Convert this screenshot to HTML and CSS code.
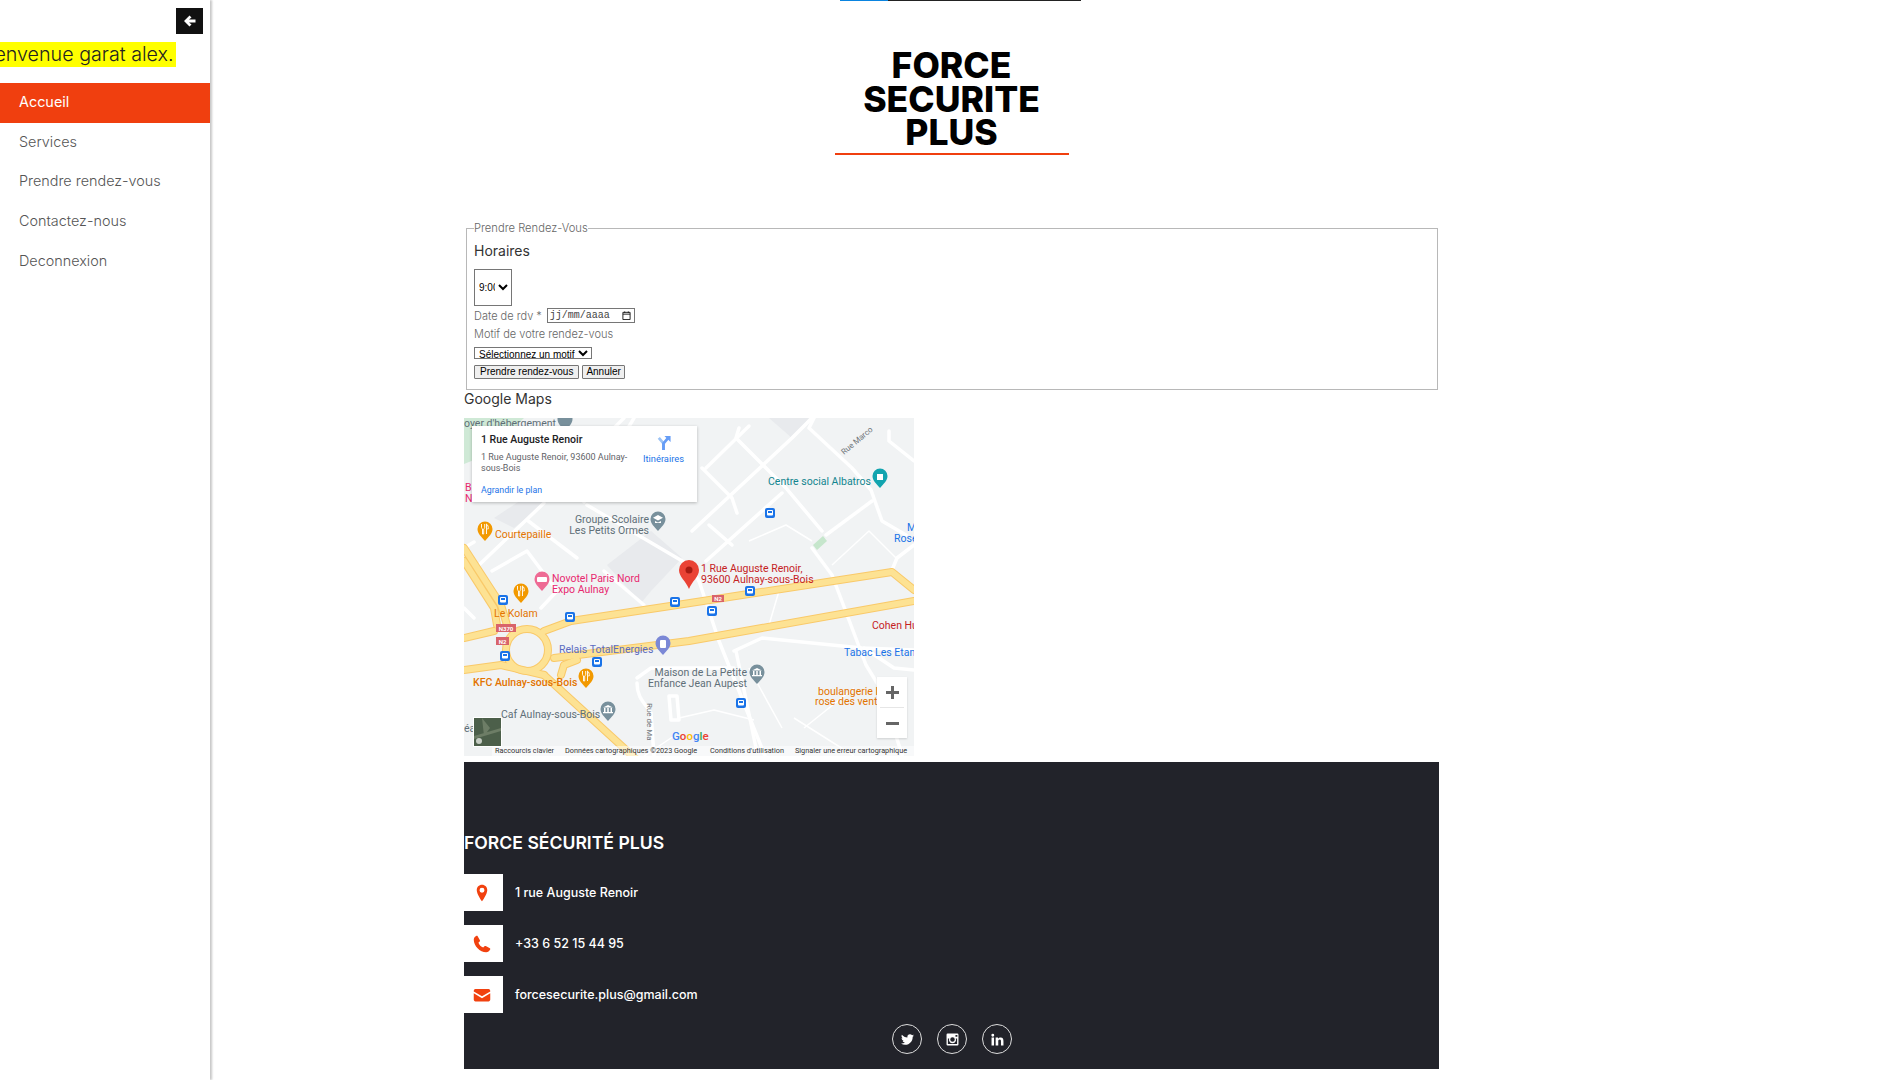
FILE: index.html
```html
<!DOCTYPE html>
<html lang="fr">
	<head>
		<meta charset="UTF-8">
		<meta name="viewport" content="width=device-width, initial-scale=1.0">
		<title>Force Securite Plus</title>
		<link rel="stylesheet" href="styles.css">
	</head>
	<body>
		<!-- Sidebar -->
		<aside class="sidebar">
			<div class="toggle-row">
				<button class="toggle-btn" type="button" aria-label="Fermer">
					<svg viewBox="0 0 24 24" width="12" height="12"><path d="M11 1l4 4-5 4h13v6H10l5 4-4 4L0 12z" fill="#fff"/></svg>
				</button>
			</div>
			<div class="welcome"><span>Bienvenue garat alex.</span></div>
			<nav class="nav">
				<a href="#" class="nav-item active">Accueil</a>
				<a href="#" class="nav-item">Services</a>
				<a href="#" class="nav-item">Prendre rendez-vous</a>
				<a href="#" class="nav-item">Contactez-nous</a>
				<a href="#" class="nav-item">Deconnexion</a>
			</nav>
		</aside>

		<main class="content">
			<div class="loader"><div class="loader-fill"></div></div>
			<h1 class="title">FORCE<br>SECURITE<br>PLUS</h1>

			<!-- Form -->
			<fieldset class="rdv">
				<legend>Prendre Rendez-Vous</legend>
				<h4 class="rdv-title">Horaires</h4>
				<select class="hour-select"><option>9:00</option></select>
				<div class="date-row">
					<label>Date de rdv *</label>
					<div class="date-input">
						<span>jj/mm/aaaa</span>
						<svg viewBox="0 0 10 10" width="9" height="9"><path d="M1 1.500h8v8H1zM1 3.500h8M3 .5v1.500M7 .5v1.500" fill="none" stroke="#111" stroke-width="1"/></svg>
					</div>
				</div>
				<label class="motif-label">Motif de votre rendez-vous</label>
				<select class="motif-select"><option>Sélectionnez un motif</option></select>
				<div class="btn-row">
					<button type="button" class="btn">Prendre rendez-vous</button>
					<button type="button" class="btn btn-cancel">Annuler</button>
				</div>
			</fieldset>

			<h4 class="maps-title">Google Maps</h4>

			<!-- Map -->
			<div class="map">
				<svg class="map-svg" viewBox="0 0 450 338" width="450" height="338">
					<defs>
						<path id="pin" d="M0 8C-3.600 3.600-7.500 1-7.500-4a7.500 7.500 0 0 1 15 0C7.500 1 3.600 3.600 0 8z"/>
						<g id="bus">
							<rect x="-5" y="-5" width="10" height="10" rx="2" fill="#1a73e8"/>
							<rect x="-3" y="-3" width="6" height="5.500" rx="1" fill="#fff"/>
							<rect x="-2" y="-2" width="4" height="2" fill="#1a73e8"/>
						</g>
						<g id="fork">
							<path d="M-3.500-9v3.500a1.500 1.500 0 0 0 1 1.400V1h1.200v-5.100a1.500 1.500 0 0 0 1-1.400V-9M1.500 1V-9c1.500 1 2 3 1.700 5H2.300" fill="none" stroke="#fff" stroke-width=".9"/>
						</g>
						<g id="school">
							<path d="M0-8l-5 2.800 5 2.700 5-2.700zM-3-2V0h6v-2L0-.5z" fill="#fff"/>
						</g>
						<g id="museum">
							<path d="M0-8l-5 2.500h10zM-4-5h1.500v4H-4zM-.75-5H.75v4H-.75zM2.500-5H4v4H2.500zM-5-1h10v1.200H-5z" fill="#fff"/>
						</g>
					</defs>

					<rect width="450" height="338" fill="#f1f3f4"/>
					<!-- green and blocks -->
					<path d="M0 0H60L20 38 0 46z" fill="#cfe9d6"/>
					<path d="M143 147l44-34 31 27-31 33-10 12z" fill="#e8eaed"/>
					<path d="M30 100l30-20 30-2-40 32z" fill="#e8eaed"/>
					<path d="M305 0h40l-17 20z" fill="#e8eaed"/>
					<path d="M349 127l10-9 4 5-10 9z" fill="#c6e6cc"/>

					<!-- small roads -->
					<g fill="none" stroke="#fff" stroke-width="3.500" stroke-linejoin="round" stroke-linecap="round">
						<path d="M275 10l-3 10 50 50 36 43"/>
						<path d="M350 0l-5 10 43 40 19 22 11 31 24 14"/>
						<path d="M228 113L328 20l20-20"/>
						<path d="M238 50l30 30 5 15"/>
						<path d="M245 107l23 20"/>
						<path d="M242 50l43-42"/>
						<path d="M318 75l-76 68"/>
						<path d="M348 130l20 27 34 90 16 26 20 64"/>
						<path d="M362 117l46-34"/>
						<path d="M428 152l5-12 17-13"/>
						<path d="M235 163l20 60 40 100 6 15"/>
						<path d="M272 233l20 97"/>
						<path d="M270 233l28-13 100 10 52 2"/>
						<path d="M425 13v10l25 20"/>
						<path d="M15 147l65-62"/>
						<path d="M28 153l35-20 30 40-16 17"/>
						<path d="M63 102l50 38"/>
						<path d="M123 87l102 60 10 16"/>
						<path d="M140 153l40 34"/>
						<path d="M173 260l14-10h38l45 0"/>
						<path d="M173 265c0 15 8 20 14 30l3 43"/>
						<path d="M205 278h8l2 24h-8zM0 130l10-6M0 190l10 10"/>
						<path d="M160 0l-14 14M120 84l50-84"/>
						<path d="M400 230l30 20 20 2"/>
					</g>
					<g fill="none" stroke="#fff" stroke-width="1.500" stroke-linejoin="round">
						<path d="M305 207l10-34"/>
						<path d="M285 123l37-16 26 16"/>
						<path d="M368 147l37-34 27 27"/>
						<path d="M285 250l33 60"/>
						<path d="M215 300l35-8 40 10M180 338l30-20M330 300l60 38M340 310l50-40"/>
					</g>

					<!-- yellow roads -->
					<g fill="none" stroke-linejoin="round" stroke-linecap="round">
						<g stroke="#f9c969" stroke-width="8">
							<path d="M80 213l27-10 106-16 215-33 22 18"/>
							<path d="M90 240l135-17 225-40"/>
							<path d="M0 220l30-7M0 252l37-5 43 10"/>
							<path d="M0 130l37 57 6 20M0 143l30 47 3 17"/>
							<path d="M80 257l92 84M97 257l3-10 13-5"/>
							<circle cx="63" cy="232" r="21"/>
						</g>
						<g stroke="#fde293" stroke-width="6">
							<path d="M80 213l27-10 106-16 215-33 22 18"/>
							<path d="M90 240l135-17 225-40"/>
							<path d="M0 220l30-7M0 252l37-5 43 10"/>
							<path d="M0 130l37 57 6 20M0 143l30 47 3 17"/>
							<path d="M80 257l92 84M97 257l3-10 13-5"/>
							<circle cx="63" cy="232" r="21"/>
						</g>
					</g>

					<!-- labels -->
					<g class="lbl-grey">
						<text x="0" y="9">oyer d'hébergement</text>
						<text x="185" y="105" text-anchor="end">Groupe Scolaire</text>
						<text x="185" y="116" text-anchor="end">Les Petits Ormes</text>
						<text x="283" y="258" text-anchor="end">Maison de La Petite</text>
						<text x="283" y="269" text-anchor="end">Enfance Jean Aupest</text>
						<text x="37" y="300">Caf Aulnay-sous-Bois</text>
						<text x="0" y="314">éa</text>
					</g>
					<text class="lbl-road" transform="translate(380 37) rotate(-40)">Rue Marco</text>
					<text class="lbl-road" transform="translate(183 285) rotate(90)">Rue de Ma</text>
					<g class="lbl-teal"><text x="304" y="67">Centre social Albatros</text></g>
					<g class="lbl-orange">
						<text x="31" y="120">Courtepaille</text>
						<text x="30" y="199">Le Kolam</text>
						<text x="9" y="268" class="lbl-bold">KFC Aulnay-sous-Bois</text>
						<text x="354" y="277">boulangerie l</text>
						<text x="351" y="287">rose des vent</text>
					</g>
					<g class="lbl-pink">
						<text x="88" y="164">Novotel Paris Nord</text>
						<text x="88" y="175">Expo Aulnay</text>
						<text x="1" y="73">B</text>
						<text x="1" y="84">N</text>
					</g>
					<g class="lbl-red">
						<text x="237" y="154">1 Rue Auguste Renoir,</text>
						<text x="237" y="165">93600 Aulnay-sous-Bois</text>
						<text x="408" y="211">Cohen Hu</text>
					</g>
					<g class="lbl-blue">
						<text x="443" y="113">M</text>
						<text x="430" y="124">Rose</text>
						<text x="380" y="238">Tabac Les Etan</text>
					</g>
					<text class="lbl-indigo" x="95" y="235">Relais TotalEnergies</text>

					<!-- pins -->
					<use href="#pin" x="101" y="5" fill="#78909c"/>
					<use href="#pin" x="194" y="105" fill="#78909c"/>
					<use href="#school" x="194" y="105"/>
					<use href="#pin" x="416" y="62" fill="#12a4af"/>
					<rect x="413" y="56" width="6" height="6" fill="#fff"/>
					<use href="#pin" x="21" y="115" fill="#f29900"/>
					<use href="#fork" x="21" y="115"/>
					<use href="#pin" x="57" y="177" fill="#f29900"/>
					<use href="#fork" x="57" y="177"/>
					<use href="#pin" x="122" y="262" fill="#f29900"/>
					<use href="#fork" x="122" y="262"/>
					<use href="#pin" x="78" y="165" fill="#ee6a94"/>
					<rect x="73" y="159" width="10" height="5" rx="1" fill="#fff"/>
					<use href="#pin" x="199" y="229" fill="#7b88d6"/>
					<rect x="196" y="222" width="6" height="8" rx="1" fill="#fff"/>
					<use href="#pin" x="293" y="258" fill="#78909c"/>
					<use href="#museum" x="293" y="258"/>
					<use href="#pin" x="144" y="295" fill="#78909c"/>
					<use href="#museum" x="144" y="295"/>

					<!-- bus stops -->
					<use href="#bus" x="306" y="95"/>
					<use href="#bus" x="39" y="182"/>
					<use href="#bus" x="211" y="184"/>
					<use href="#bus" x="286" y="173"/>
					<use href="#bus" x="106" y="199"/>
					<use href="#bus" x="248" y="193"/>
					<use href="#bus" x="41" y="238"/>
					<use href="#bus" x="133" y="244"/>
					<use href="#bus" x="277" y="285"/>

					<!-- road shields -->
					<rect x="248" y="177" width="12" height="7" fill="#d9636a"/>
					<text class="shield" x="254" y="183" text-anchor="middle">N2</text>
					<rect x="32" y="206" width="20" height="8" fill="#d9636a"/>
					<text class="shield" x="42" y="212.500" text-anchor="middle">N370</text>
					<rect x="32" y="219" width="13" height="8" fill="#d9636a"/>
					<text class="shield" x="38.500" y="225.500" text-anchor="middle">N2</text>

					<!-- red marker -->
					<path d="M225 171c-3-8-10-12-10-19a10 10 0 0 1 20 0c0 7-7 11-10 19z" fill="#ea4335"/>
					<circle cx="225" cy="152" r="3.500" fill="#a61b12"/>

					<!-- layer thumbnail -->
					<rect x="9" y="299" width="29" height="30" fill="#fff"/>
					<rect x="10" y="300" width="27" height="28" fill="#4c5f4a"/>
					<path d="M10 318l27-8v3l-27 8zM18 300l8 10-6 8z" fill="#6d7d66"/>
					<circle cx="15" cy="323" r="3" fill="#c6cdc4"/>

					<!-- google logo -->
					<text class="google" x="208" y="322"><tspan fill="#4285f4">G</tspan><tspan fill="#ea4335">o</tspan><tspan fill="#fbbc05">o</tspan><tspan fill="#4285f4">g</tspan><tspan fill="#34a853">l</tspan><tspan fill="#ea4335">e</tspan></text>

					<!-- attribution -->
					<rect x="28" y="328" width="422" height="10" fill="#fff" fill-opacity=".5"/>
					<g class="attrib">
						<text x="31" y="335">Raccourcis clavier</text>
						<text x="101" y="335">Données cartographiques ©2023 Google</text>
						<text x="246" y="335">Conditions d'utilisation</text>
						<text x="331" y="335">Signaler une erreur cartographique</text>
					</g>
				</svg>

				<div class="map-card">
					<div class="map-card-text">
						<div class="map-card-name">1 Rue Auguste Renoir</div>
						<div class="map-card-addr">1 Rue Auguste Renoir, 93600 Aulnay-sous-Bois</div>
						<a href="#" class="map-card-link">Agrandir le plan</a>
					</div>
					<a href="#" class="map-card-dir">
						<svg viewBox="0 0 16 16" width="15" height="15"><path d="M8 16V9L3 3" fill="none" stroke="#9cc3f5" stroke-width="3"/><path d="M8 16V9l5-6" fill="none" stroke="#669df6" stroke-width="3"/><path d="M9 1h6.500v6.500z" fill="#669df6"/></svg>
						<span>Itinéraires</span>
					</a>
				</div>

				<div class="map-zoom">
					<div class="map-zoom-cell">
						<svg viewBox="0 0 13 13" width="13" height="13"><path d="M5 0h3v5h5v3H8v5H5V8H0V5h5z" fill="#666"/></svg>
					</div>
					<div class="map-zoom-cell map-zoom-minus">
						<svg viewBox="0 0 13 13" width="13" height="13"><path d="M0 5h13v3H0z" fill="#666"/></svg>
					</div>
				</div>
			</div>

			<!-- Footer -->
			<footer class="footer">
				<h3 class="footer-title">FORCE SÉCURITÉ PLUS</h3>
				<div class="contacts">
					<div class="contact-row">
						<div class="contact-icon">
							<svg viewBox="0 0 24 24" width="18" height="18"><path d="M12 1C7.900 1 5 4.200 5 8.200 5 13.500 12 23 12 23s7-9.500 7-14.800C19 4.200 16.100 1 12 1zm0 10.500a3.300 3.300 0 1 1 0-6.600 3.300 3.300 0 0 1 0 6.600z" fill="#f1410f"/></svg>
						</div>
						<span>1 rue Auguste Renoir</span>
					</div>
					<div class="contact-row">
						<div class="contact-icon">
							<svg viewBox="0 0 24 24" width="18" height="18"><path d="M6.200 1.500l3 5.500c.3.600.2 1.200-.3 1.700L7.200 10.400c1.200 2.900 3.500 5.200 6.400 6.400l1.700-1.700c.5-.5 1.100-.6 1.700-.3l5.500 3c.6.400.7 1 .4 1.600-1 2-3 3.600-5.300 3.600C9.300 23 1 14.700 1 6.400c0-2.300 1.600-4.300 3.600-5.300.6-.3 1.200-.2 1.600.4z" fill="#f1410f"/></svg>
						</div>
						<span>+33 6 52 15 44 95</span>
					</div>
					<div class="contact-row">
						<div class="contact-icon">
							<svg viewBox="0 0 24 24" width="18" height="18"><path d="M1 6.500C1 5.100 2 4 3.200 4h17.600C22 4 23 5.100 23 6.500v.7l-11 6.500L1 7.200zM1 9.700l11 6.500 11-6.500V18c0 1.400-1 2.500-2.200 2.500H3.200C2 20.500 1 19.400 1 18z" fill="#f1410f"/></svg>
						</div>
						<span>forcesecurite.plus@gmail.com</span>
					</div>
				</div>
				<div class="socials">
					<a href="#" class="social">
						<svg viewBox="0 0 24 24" width="13" height="13"><path d="M23.953 4.570a10 10 0 0 1-2.825.775 4.958 4.958 0 0 0 2.163-2.723c-.951.555-2.005.959-3.127 1.184a4.920 4.920 0 0 0-8.384 4.482C7.690 8.095 4.067 6.130 1.640 3.162a4.822 4.822 0 0 0-.666 2.475c0 1.710.870 3.213 2.188 4.096a4.904 4.904 0 0 1-2.228-.616v.060a4.923 4.923 0 0 0 3.946 4.827 4.996 4.996 0 0 1-2.212.085 4.936 4.936 0 0 0 4.604 3.417 9.867 9.867 0 0 1-6.102 2.105c-.390 0-.779-.023-1.170-.067a13.995 13.995 0 0 0 7.557 2.209c9.053 0 13.998-7.496 13.998-13.985 0-.210 0-.420-.015-.630A9.935 9.935 0 0 0 24 4.590z" fill="#fff"/></svg>
					</a>
					<a href="#" class="social">
						<svg viewBox="0 0 24 24" width="13" height="13"><path d="M3 1h18a2 2 0 0 1 2 2v18a2 2 0 0 1-2 2H3a2 2 0 0 1-2-2V3a2 2 0 0 1 2-2zm14.500 2.500v3.500H21V3.500zM3.500 10v10.500h17V10h-2.400a6.500 6.500 0 1 1-12.200 0zM12 7.800a4.200 4.200 0 1 0 0 8.400 4.200 4.200 0 0 0 0-8.400z" fill="#fff" fill-rule="evenodd"/></svg>
					</a>
					<a href="#" class="social">
						<svg viewBox="0 0 24 24" width="13" height="13"><path d="M1 8.500h4.600V23H1zM3.300 1.500a2.650 2.650 0 1 1 0 5.300 2.650 2.650 0 0 1 0-5.300zM8.600 8.500H13v2c.7-1.300 2.300-2.400 4.600-2.400 4.600 0 5.400 3 5.400 7V23h-4.600v-7c0-1.700 0-3.800-2.300-3.800s-2.700 1.800-2.700 3.700V23H8.600z" fill="#fff"/></svg>
					</a>
				</div>
			</footer>
		</main>
	</body>
</html>
```

FILE: styles.css
```css
body {
	display: flex;
	margin: 0;
	font-family: 'Inter', 'Open Sans', sans-serif;
	background: #fff;
	color: #222;
	overflow: hidden;
}

/* Sidebar */
.sidebar {
	width: 210px;
	height: 100vh;
	flex-shrink: 0;
	background: #fff;
	box-shadow: 2px 0 2px #c8c8c8;
	overflow: hidden;
}

.toggle-row {
	display: flex;
	justify-content: flex-end;
	padding: 8px 7px 8px 0;
}

.toggle-btn {
	display: flex;
	align-items: center;
	justify-content: center;
	width: 27px;
	height: 26px;
	padding: 0;
	border: 0;
	background: #111;
}

.welcome {
	width: 176px;
	height: 25px;
	line-height: 25px;
	font-size: 19.700px;
	font-weight: 300;
	color: #222;
	white-space: nowrap;
	background: #ff0;
	overflow: hidden;
}

.welcome span {
	margin-left: -23px;
}

.nav {
	display: flex;
	flex-direction: column;
	margin-top: 16px;
}

.nav-item {
	display: block;
	height: 39.700px;
	line-height: 38px;
	padding-left: 19px;
	font-size: 14.400px;
	font-weight: 300;
	color: #555;
	text-decoration: none;
}

.nav-item.active {
	background: #f03f0f;
	color: #fff;
	font-weight: 400;
}

/* Main column */
.content {
	width: 975px;
	margin-left: 254px;
}

.loader {
	width: 241px;
	height: 1px;
	margin-left: 376px;
	background: #222;
}

.loader-fill {
	width: 48px;
	height: 1px;
	background: #0a84e0;
}

.title {
	width: 234px;
	margin: 48px auto 64px;
	padding-bottom: 3.500px;
	border-bottom: 2px solid #f03f0f;
	font-size: 35.500px;
	font-weight: 800;
	line-height: 33.500px;
	text-align: center;
	color: #000;
}

/* Form */
.rdv {
	margin: 0 1px 0 2px;
	padding: 0 7px 10px 7px;
	border: 1px solid #b8b8b8;
	font-size: 11px;
	font-weight: 300;
	color: #666;
}

.rdv legend {
	padding: 0;
	font-size: 11.200px;
	font-weight: 300;
	line-height: 18px;
	color: #666;
}

.rdv-title {
	margin: 4px 0 8px;
	font-size: 14px;
	font-weight: 400;
	line-height: 20px;
	color: #333;
}

.hour-select {
	display: block;
	width: 38px;
	height: 37px;
	border-radius: 0;
	font-family: 'Liberation Sans', sans-serif;
	font-size: 10px;
	background: #fff;
}

.date-row {
	display: flex;
	align-items: center;
	gap: 5px;
	height: 15px;
	margin-top: 2px;
}

.date-input {
	display: flex;
	align-items: center;
	justify-content: space-between;
	width: 88px;
	height: 15px;
	box-sizing: border-box;
	padding: 0 3px 0 2px;
	border: 1px solid #767676;
	font-family: 'Liberation Mono', monospace;
	font-size: 10px;
	font-weight: 400;
	color: #444;
}

.motif-label {
	display: block;
	margin-top: 2px;
	line-height: 18px;
}

.motif-select {
	display: block;
	width: 118px;
	height: 12px;
	margin-top: 4px;
	border-radius: 0;
	font-family: 'Liberation Sans', sans-serif;
	font-size: 10px;
	background: #fff;
}

.btn-row {
	display: flex;
	gap: 3px;
	margin-top: 6px;
}

.btn {
	height: 14px;
	padding: 0 5px;
	border: 1px solid #767676;
	border-radius: 1px;
	font-family: 'Liberation Sans', sans-serif;
	font-size: 10px;
	line-height: 12px;
	color: #000;
	background: #efefef;
}

.btn-cancel {
	padding: 0 3px;
}

.maps-title {
	height: 28px;
	margin: 0;
	font-size: 14px;
	font-weight: 400;
	line-height: 18px;
	color: #333;
}

/* Map */
.map {
	position: relative;
	width: 450px;
	height: 338px;
	font-family: 'Roboto', sans-serif;
}

.map-svg {
	display: block;
	font-family: 'Roboto', sans-serif;
	font-size: 10.500px;
}

.lbl-grey text { fill: #5f6f78; }
.lbl-teal text { fill: #12858f; }
.lbl-orange text { fill: #e37400; }
.lbl-pink text { fill: #e8286f; }
.lbl-red text { fill: #c5221f; }
.lbl-blue text { fill: #1a73e8; }
.lbl-indigo { fill: #5c6bc0; }
.lbl-bold { font-weight: 500; }

.lbl-road {
	font-size: 8px;
	fill: #70757a;
}

.shield {
	font-size: 6px;
	font-weight: 700;
	fill: #fff;
}

.google {
	font-size: 11.500px;
	font-weight: 500;
}

.attrib text {
	font-size: 7.300px;
	fill: #333;
}

.map-card {
	position: absolute;
	top: 8px;
	left: 8px;
	display: flex;
	width: 225px;
	height: 76px;
	box-sizing: border-box;
	padding: 7px 9px;
	background: #fff;
	box-shadow: 0 1px 3px rgba(0, 0, 0, 0.25);
}

.map-card-text {
	width: 150px;
	flex-shrink: 0;
}

.map-card-name {
	font-size: 10.500px;
	font-weight: 500;
	line-height: 13px;
	color: #202124;
}

.map-card-addr {
	margin-top: 6px;
	font-size: 9px;
	line-height: 11px;
	color: #5f6368;
}

.map-card-link {
	display: block;
	margin-top: 11px;
	font-size: 8.800px;
	color: #1a73e8;
	text-decoration: none;
}

.map-card-dir {
	display: flex;
	flex-direction: column;
	align-items: center;
	gap: 3px;
	margin-left: 12px;
	padding-top: 2px;
	font-size: 9.300px;
	color: #1a73e8;
	text-decoration: none;
}

.map-zoom {
	position: absolute;
	top: 259px;
	left: 413px;
	display: flex;
	flex-direction: column;
	width: 30px;
	height: 61px;
	background: #fff;
	box-shadow: 0 1px 2px rgba(0, 0, 0, 0.15);
}

.map-zoom-cell {
	display: flex;
	flex: 1;
	align-items: center;
	justify-content: center;
}

.map-zoom-minus {
	margin: 0 3px;
	border-top: 1px solid #e6e6e6;
}

/* Footer */
.footer {
	height: 307px;
	margin-top: 6px;
	background: #22232a;
	color: #fff;
	overflow: hidden;
}

.footer-title {
	margin: 70px 0 20px;
	font-size: 17.600px;
	font-weight: 600;
	line-height: 22px;
	color: #fff;
}

.contacts {
	display: flex;
	flex-direction: column;
	gap: 14px;
}

.contact-row {
	display: flex;
	align-items: center;
	gap: 12px;
	height: 37px;
	font-size: 12.500px;
	font-weight: 500;
}

.contact-icon {
	display: flex;
	align-items: center;
	justify-content: center;
	width: 36px;
	height: 37px;
	padding-right: 3px;
	background: #fff;
}

.socials {
	display: flex;
	justify-content: center;
	gap: 15px;
	margin-top: 11px;
	padding-left: 1px;
}

.social {
	display: flex;
	align-items: center;
	justify-content: center;
	width: 28px;
	height: 28px;
	border: 1px solid #ddd;
	border-radius: 50%;
}
```
